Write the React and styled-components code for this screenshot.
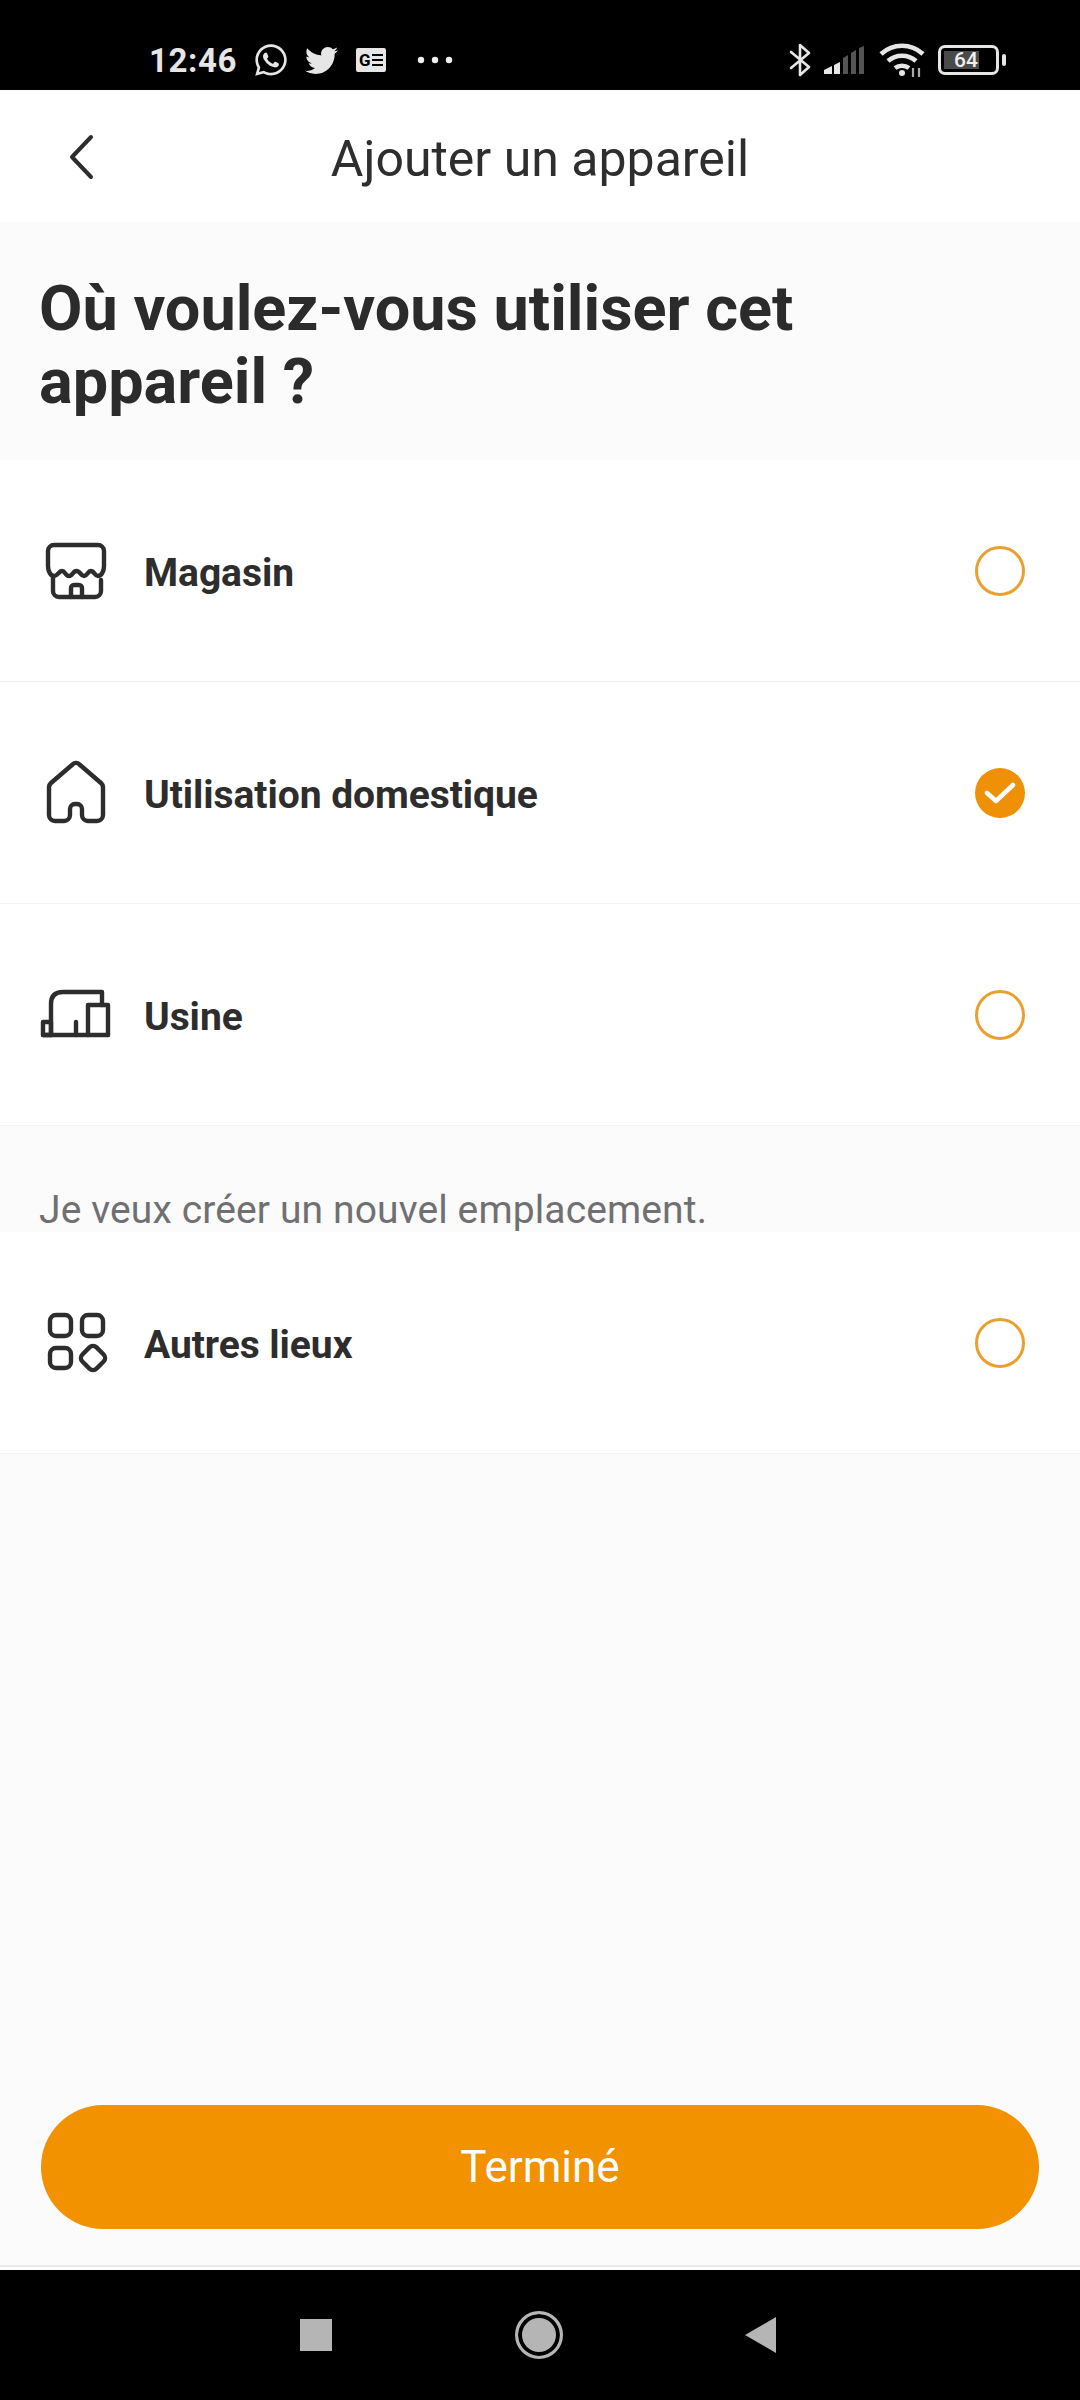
import React from "react";
import styled, { createGlobalStyle } from "styled-components";
import { FaWhatsapp, FaTwitter } from "react-icons/fa";

const Global = createGlobalStyle`
  html, body { margin: 0; padding: 0; background: #fbfbfb; }
  * { box-sizing: border-box; }
`;

const Page = styled.div`
  width: 1080px;
  height: 2400px;
  display: flex;
  flex-direction: column;
  background: #fbfbfb;
  font-family: Roboto, "Liberation Sans", sans-serif;
  color: #2b2b2b;
  overflow: hidden;
`;

const StatusBar = styled.div`
  height: 90px;
  flex: none;
  background: #000;
  color: #e6e6e6;
  display: flex;
  align-items: center;
  justify-content: space-between;
  padding: 30px 81px 0 149px;
`;
const StatusGroup = styled.div`
  display: flex;
  align-items: center;
`;
const Clock = styled.span`
  font-size: 33px;
  font-weight: 700;
  letter-spacing: 0.6px;
  line-height: 1;
  margin-right: 16px;
`;
const Glyph = styled.svg`
  display: block;
  flex: none;
  margin-left: ${(p) => p.$ml || 0}px;
`;
const BatteryBox = styled.div`
  width: 61px;
  height: 30px;
  border: 3px solid #e6e6e6;
  border-radius: 7px;
  padding: 3px;
  position: relative;
  margin-left: 13px;
  &::after {
    content: "";
    position: absolute;
    right: -10px;
    top: 6px;
    width: 4px;
    height: 12px;
    border-radius: 2px;
    background: #e6e6e6;
  }
`;
const BatteryFill = styled.div`
  height: 100%;
  width: 72%;
  background: #4a4a4a;
  display: flex;
  align-items: center;
`;
const BatteryText = styled.span`
  font-size: 21px;
  font-weight: 500;
  color: #eee;
  line-height: 1;
  margin-left: 10px;
`;

const Header = styled.header`
  height: 132px;
  flex: none;
  background: #fff;
  position: relative;
  display: flex;
  align-items: center;
  justify-content: center;
`;
const BackButton = styled.div`
  position: absolute;
  left: 66px;
  top: 43px;
  line-height: 0;
`;
const HeaderTitle = styled.h1`
  margin: 0;
  font-size: 50px;
  font-weight: 400;
  line-height: 1;
  color: #2e2e2e;
  position: relative;
  top: 3px;
`;
const Question = styled.h2`
  margin: 0;
  height: 238px;
  padding: 50px 39px 0;
  font-size: 63px;
  line-height: 73px;
  font-weight: 700;
  color: #2b2b2b;
  flex: none;
`;
const Row = styled.div`
  height: 222px;
  flex: none;
  background: #fff;
  display: flex;
  align-items: center;
  padding: 0 55px 0 44px;
  border-bottom: 1px solid #f3f3f3;
`;
const IconSlot = styled.div`
  width: 100px;
  flex: none;
  line-height: 0;
  svg { overflow: visible; }
`;
const RowLabel = styled.span`
  flex: 1;
  font-size: 39px;
  font-weight: 700;
  color: #2d2d2d;
  letter-spacing: -0.06px;
  padding-top: 5px;
`;
const Radio = styled.div`
  width: 50px;
  height: 50px;
  border-radius: 50%;
  border: ${(p) => (p.$checked ? "none" : "3px solid #e9a02f")};
  background: ${(p) => (p.$checked ? "#ef9107" : "#fff")};
  display: flex;
  align-items: center;
  justify-content: center;
`;
const Hint = styled.div`
  height: 106px;
  flex: none;
  padding: 59px 39px 0;
  font-size: 39px;
  line-height: 50px;
  color: #707073;
  overflow: hidden;
  letter-spacing: 0.12px;
`;
const Spacer = styled.div`
  flex: 1;
`;
const Footer = styled.div`
  height: 165px;
  flex: none;
  padding: 0 41px;
  border-bottom: 3px solid #fff;
  box-shadow: inset 0 -2px 0 #e8e8e8;
`;
const Done = styled.button`
  width: 998px;
  height: 124px;
  border: none;
  border-radius: 62px;
  background: #f39200;
  color: #fff;
  font-family: inherit;
  font-size: 44px;
  font-weight: 400;
  display: block;
`;
const NavBar = styled.nav`
  height: 130px;
  flex: none;
  background: #000;
  display: flex;
  align-items: center;
  padding: 0 0 0 300px;
`;
const NavSquare = styled.div`
  width: 32px;
  height: 32px;
  background: #b5b5b5;
`;
const NavHome = styled.div`
  width: 48px;
  height: 48px;
  border-radius: 50%;
  border: 3px solid #b5b5b5;
  background: #b5b5b5;
  box-shadow: inset 0 0 0 4px #000;
  margin-left: 183px;
`;
const NavBack = styled.div`
  width: 0;
  height: 0;
  border-style: solid;
  border-width: 18px 31px 18px 0;
  border-color: transparent #b5b5b5 transparent transparent;
  margin-left: 182px;
`;

const iconProps = {
  fill: "none",
  stroke: "#2d2d2d",
  strokeWidth: 4.4,
  strokeLinecap: "round",
  strokeLinejoin: "round",
};

const Shop = () => (
  <svg width="64" height="64" viewBox="0 0 64 64" {...iconProps}>
    <path d="M10 6h44a6 6 0 0 1 6 6v15c0 6-3 10-6 10-3.500 0-3.500-5-7-5s-3.500 5-7 5-3.500-5-7.500-5-3.500 5-7.500 5-3.500-5-7-5-4 5-8 5c-3 0-6-4-6-10V12a6 6 0 0 1 6-6z" />
    <path d="M9 37v15a6 6 0 0 0 6 6h36a6 6 0 0 0 6-6V41" />
    <path d="M27 58V49a3 3 0 0 1 3-3h5a3 3 0 0 1 3 3v9" />
  </svg>
);
const Home = () => (
  <svg width="64" height="64" viewBox="0 0 64 64" {...iconProps}>
    <path d="M28.500 3.500a5 5 0 0 1 7 0L57 22a6 6 0 0 1 2 4v28a6 6 0 0 1-6 6H44a6 6 0 0 1-6-6v-6a5 5 0 0 0-5-5h-2a5 5 0 0 0-5 5v6a6 6 0 0 1-6 6H11a6 6 0 0 1-6-6V26a6 6 0 0 1 2-4z" />
  </svg>
);
const Factory = () => (
  <svg width="64" height="64" viewBox="0 0 64 64" {...iconProps}>
    <path d="M-1 39h8v13h-8z" />
    <path d="M7 52V21q0-12 12-12h39v13" />
    <path d="M-1 52h65" />
    <path d="M44 52V22h20v30" />
    <path d="M32 52V39" />
  </svg>
);
const Grid = () => (
  <svg width="64" height="64" viewBox="0 0 64 64" {...iconProps}>
    <rect x="6" y="4" width="21" height="21" rx="6" />
    <rect x="38" y="4" width="21" height="21" rx="6" />
    <rect x="6" y="37" width="21" height="20" rx="6" />
    <rect x="39" y="37" width="20" height="20" rx="5" transform="rotate(45 49 47)" />
  </svg>
);
const Check = () => (
  <svg width="32" height="24" viewBox="0 0 32 24" fill="none" stroke="#fff" strokeWidth="4.5" strokeLinecap="round" strokeLinejoin="round">
    <path d="M3 12l9 8L29 4" />
  </svg>
);

const options = [
  { label: "Magasin", icon: <Shop /> },
  { label: "Utilisation domestique", icon: <Home />, checked: true },
  { label: "Usine", icon: <Factory /> },
];

const OptionRow = ({ label, icon, checked }) => (
  <Row>
    <IconSlot>{icon}</IconSlot>
    <RowLabel>{label}</RowLabel>
    <Radio $checked={checked}>{checked && <Check />}</Radio>
  </Row>
);

export default function App() {
  return (
    <Page>
      <Global />
      <StatusBar>
        <StatusGroup>
          <Clock>12:46</Clock>
          <FaWhatsapp size={36} />
          <Glyph as={FaTwitter} size={33} $ml={16} />
          <Glyph width="30" height="24" viewBox="0 0 30 24" $ml={18}>
            <rect width="30" height="24" rx="2" fill="#e6e6e6" />
            <text x="3" y="18" fontSize="17" fontWeight="700" fontFamily="Roboto, sans-serif" fill="#000">G</text>
            <path d="M16 7h11M16 12h11M16 17h11" stroke="#000" strokeWidth="2" />
          </Glyph>
          <Glyph width="36" height="8" viewBox="0 0 36 8" $ml={31}>
            <circle cx="4" cy="4" r="3.200" fill="#eee" />
            <circle cx="18" cy="4" r="3.200" fill="#eee" />
            <circle cx="32" cy="4" r="3.200" fill="#eee" />
          </Glyph>
        </StatusGroup>
        <StatusGroup>
          <Glyph width="22" height="34" viewBox="0 0 22 34" fill="none" stroke="#e6e6e6" strokeWidth="2.600" strokeLinecap="round" strokeLinejoin="round">
            <path d="M2 9l18 15-9 8V2l9 8-18 15" />
          </Glyph>
          <Glyph width="40" height="28" viewBox="0 0 40 28" $ml={13}>
            <path d="M0 28v-4l8-4v8z" fill="#e6e6e6" />
            <path d="M10 28V19l6-3v12z" fill="#e6e6e6" />
            <path d="M19 28V12l5-3v19z" fill="#555" />
            <path d="M27 28V7l5-3v24z" fill="#555" />
            <path d="M35 28V2l5-2v28z" fill="#555" />
          </Glyph>
          <Glyph width="46" height="34" viewBox="0 0 46 34" $ml={15} fill="none" stroke="#e6e6e6" strokeWidth="4.600">
            <path d="M2 11c12-11 30-11 42 0" />
            <path d="M9 18c8-7 20-7 28 0" />
            <path d="M16 25c4-3 10-3 14 0" />
            <circle cx="23" cy="30" r="3" fill="#e6e6e6" stroke="none" />
            <path d="M34 25v9M40 25v9" stroke="#aaa" strokeWidth="2.200" />
          </Glyph>
          <BatteryBox>
            <BatteryFill>
              <BatteryText>64</BatteryText>
            </BatteryFill>
          </BatteryBox>
        </StatusGroup>
      </StatusBar>
      <Header>
        <BackButton>
          <svg width="32" height="48" viewBox="0 0 32 48" fill="none" stroke="#2d2d2d" strokeWidth="4" strokeLinecap="round" strokeLinejoin="round">
            <path d="M25 4 6 24l19 20" />
          </svg>
        </BackButton>
        <HeaderTitle>Ajouter un appareil</HeaderTitle>
      </Header>
      <Question>
        Où voulez-vous utiliser cet
        <br />
        appareil ?
      </Question>
      {options.map((o) => (
        <OptionRow key={o.label} {...o} />
      ))}
      <Hint>Je veux créer un nouvel emplacement.</Hint>
      <OptionRow label="Autres lieux" icon={<Grid />} />
      <Spacer />
      <Footer>
        <Done>Terminé</Done>
      </Footer>
      <NavBar>
        <NavSquare />
        <NavHome />
        <NavBack />
      </NavBar>
    </Page>
  );
}
